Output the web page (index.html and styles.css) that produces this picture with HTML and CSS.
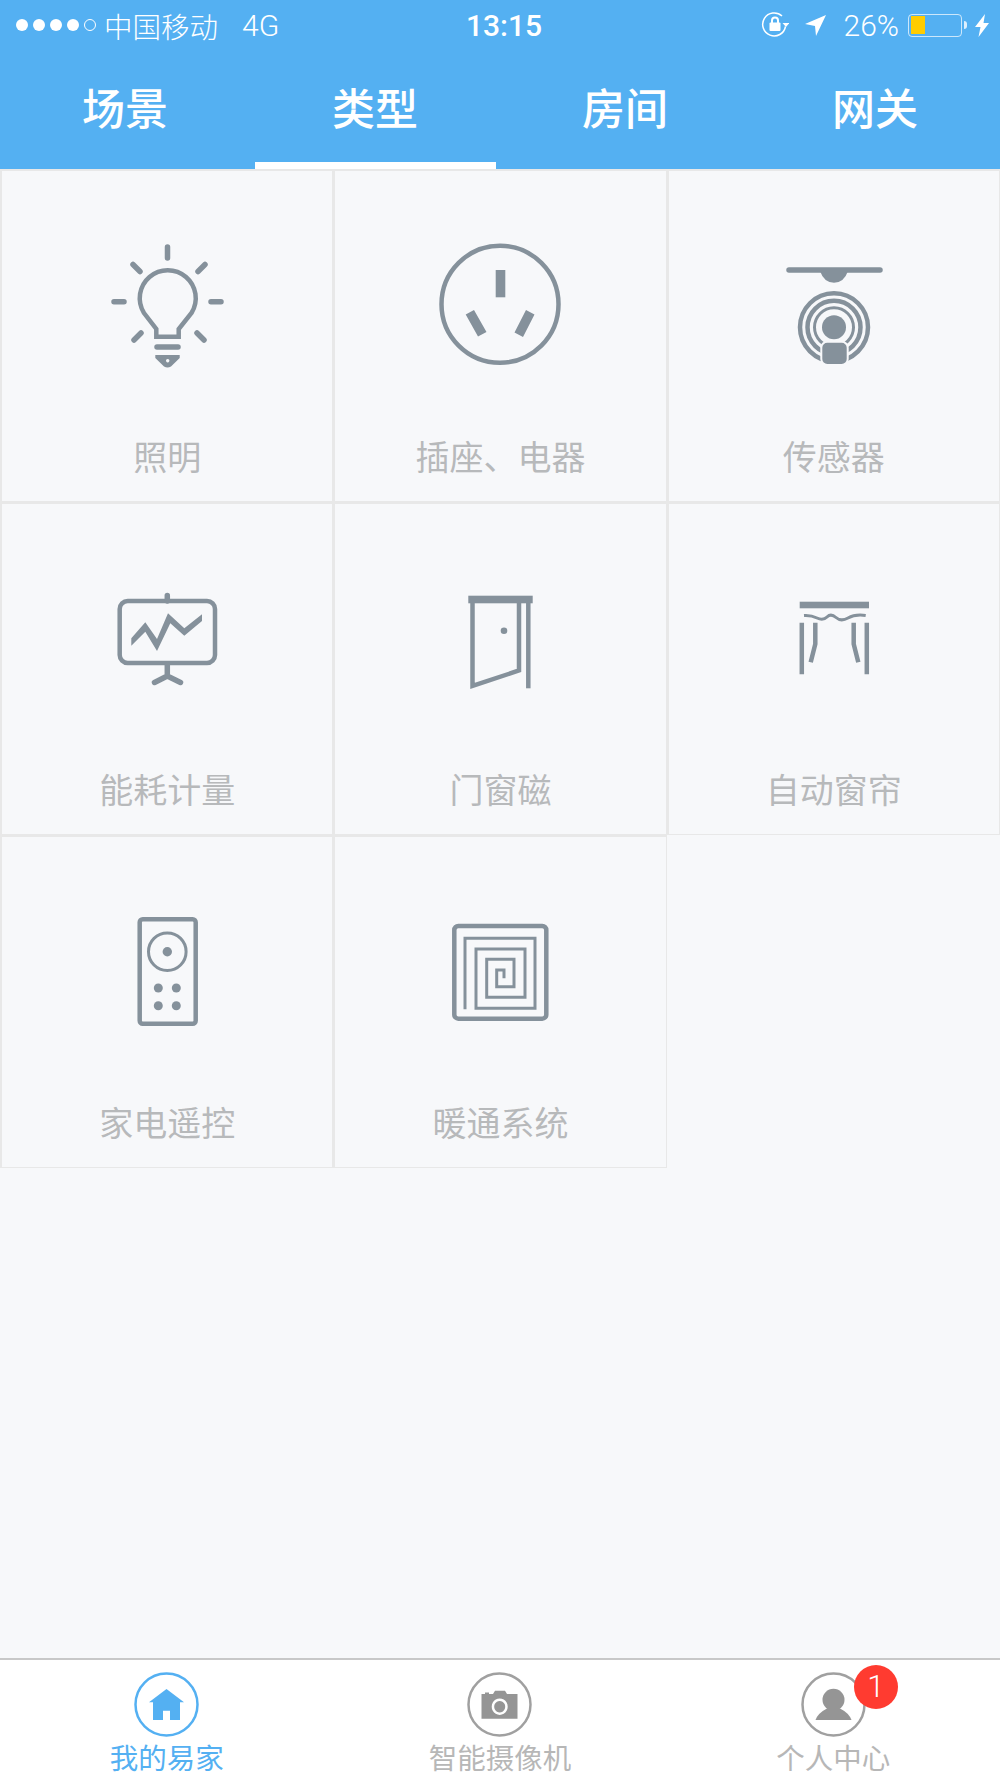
FILE: index.html
```html
<!DOCTYPE html>
<html lang="zh-CN">

<head>
    <meta charset="UTF-8" />
    <meta name="viewport" content="width=device-width, initial-scale=1.0" />
    <title>类型</title>
    <link rel="stylesheet" href="styles.css">
</head>

<body>
    <div class="app">
        <header class="header">
            <div class="status-bar">
                <div class="status-left">
                    <svg class="signal" width="86" height="16" viewBox="0 0 86 16">
                        <circle cx="7" cy="8" r="6" />
                        <circle cx="24" cy="8" r="6" />
                        <circle cx="41" cy="8" r="6" />
                        <circle cx="58" cy="8" r="6" />
                        <circle class="hollow" cx="75" cy="8" r="5.5" />
                    </svg>
                    <span class="carrier">中国移动</span>
                    <span class="network">4G</span>
                </div>
                <div class="status-time">13:15</div>
                <div class="status-right">
                    <svg class="rotation" width="28" height="28" viewBox="0 0 28 28">
                        <path class="line" d="M24.5 15.5A11.5 11.5 0 1 1 21 5" />
                        <path d="M21.5 12h7l-3.500 4z" />
                        <rect x="8.500" y="11.500" width="11" height="8.500" rx="1" />
                        <path class="line thin" d="M11 12V9.500a3 3 0 0 1 6 0V12" />
                    </svg>
                    <svg class="arrow" width="22" height="22" viewBox="0 0 22 22">
                        <path d="M21 1L11 22 10 12 0 10z" />
                    </svg>
                    <span class="percent">26%</span>
                    <div class="battery">
                        <div class="battery-fill"></div>
                    </div>
                    <div class="battery-nub"></div>
                    <svg class="bolt" width="14" height="23" viewBox="0 0 14 23">
                        <path d="M10 0L0 13h5.500L3.500 23 14 9H8.500z" />
                    </svg>
                </div>
            </div>
            <nav class="tabs">
                <div class="tab"><span class="tab-label">场景</span></div>
                <div class="tab active"><span class="tab-label">类型</span><span class="tab-line"></span></div>
                <div class="tab"><span class="tab-label">房间</span></div>
                <div class="tab"><span class="tab-label">网关</span></div>
            </nav>
        </header>

        <main class="grid">
            <div class="cell">
                <svg class="icon" viewBox="0 0 140 140">
                    <g class="rays">
                        <path d="M70.500 12V23M36 29.500L43 36.500M108 29.500L101 36.500M17 66.700H27M114 66.700H124M37 105L44 98M107 105L100 98" />
                    </g>
                    <path class="outline" d="M59.300 101.700V94L47 78A28 28 0 1 1 94.500 78L81.700 94V101.700Z" />
                    <path class="rays" d="M60 112H81" />
                    <path class="solid" fill-rule="evenodd" d="M58.300 120H82.700V123L74 131.500Q70.500 133.500 67 131.500L58.300 123ZM70.700 124a1.700 1.700 0 1 0 .01 0Z" />
                </svg>
                <span class="cell-label">照明</span>
            </div>
            <div class="cell">
                <svg class="icon" viewBox="0 0 140 140">
                    <circle class="outline" cx="70" cy="69.300" r="58.500" />
                    <rect class="solid" x="65.700" y="35" width="9.600" height="27.300" />
                    <path class="solid" d="M35.700 79.500L44 75 56.500 97 48 101.500ZM104.500 79.500L96 75 84.500 97.500 93 102Z" />
                </svg>
                <span class="cell-label">插座、电器</span>
            </div>
            <div class="cell">
                <svg class="icon" viewBox="0 0 140 140">
                    <path class="rays" d="M25 35H116" />
                    <path class="solid" d="M56 36H84Q80 47.700 70 47.700T56 36Z" />
                    <circle class="outline" cx="70" cy="92.300" r="34" />
                    <circle class="outline" cx="70" cy="92.300" r="26.500" />
                    <circle class="outline thin" cx="70" cy="92.300" r="19.500" />
                    <circle class="solid" cx="70" cy="92.300" r="12" />
                    <rect class="solid gap" x="57.300" y="106.700" width="26.400" height="23.300" rx="6" />
                </svg>
                <span class="cell-label">传感器</span>
            </div>
            <div class="cell">
                <svg class="icon" viewBox="0 0 140 140">
                    <rect class="outline" x="22.700" y="33" width="95.300" height="62" rx="8" />
                    <path class="rays" d="M70.300 27.500V33M70.300 97V108L57.500 114.500M70.300 108L83.500 114.500" />
                    <path class="solid" d="M34.300 70.300L48.300 54.300 60 71 71 45.300 87.300 60.300 105 46.300V53L87.300 67.700 73.300 55.300 60 83 48.300 63.700 34.300 77.700Z" />
                </svg>
                <span class="cell-label">能耗计量</span>
            </div>
            <div class="cell">
                <svg class="icon" viewBox="0 0 140 140">
                    <rect class="solid" x="38.300" y="27.700" width="64.400" height="7.600" />
                    <path class="outline" d="M42.500 35V118L89 102.500V35" />
                    <path class="outline" d="M98.300 35V120.300" />
                    <circle class="solid" cx="74" cy="62.700" r="3.300" />
                </svg>
                <span class="cell-label">门窗磁</span>
            </div>
            <div class="cell">
                <svg class="icon" viewBox="0 0 140 140">
                    <rect class="solid" x="35.700" y="33.700" width="69.300" height="6.600" />
                    <path class="outline wave" d="M40 47.500Q47 47 53 50T63 49 72 49.500 84 50 101.700 47.500" />
                    <path class="outline" d="M37.800 54.700V106.300M102.800 54.700V106.300M51.300 54.700V76L46.700 94.300M89.700 54.700V76L94.300 94.300" />
                </svg>
                <span class="cell-label">自动窗帘</span>
            </div>
            <div class="cell">
                <svg class="icon" viewBox="0 0 140 140">
                    <rect class="outline" x="42.700" y="18.300" width="56" height="104.400" rx="3" />
                    <circle class="outline thin" cx="70.300" cy="50.700" r="18.800" />
                    <circle class="solid" cx="70.300" cy="50.700" r="4.700" />
                    <circle class="solid" cx="61.300" cy="87" r="4.500" />
                    <circle class="solid" cx="79.300" cy="87" r="4.500" />
                    <circle class="solid" cx="61.300" cy="104.700" r="4.500" />
                    <circle class="solid" cx="79.300" cy="104.700" r="4.500" />
                </svg>
                <span class="cell-label">家电遥控</span>
            </div>
            <div class="cell">
                <svg class="icon" viewBox="0 0 140 140">
                    <rect class="outline" x="24.300" y="25" width="92" height="92.700" rx="4" />
                    <path class="outline thin" d="M35 108.300V37.300H105V107.300H46V48H95V96.300H56.700V58.300H84V85.700H66.700V69H74V77.300" />
                </svg>
                <span class="cell-label">暖通系统</span>
            </div>
            <div class="cell-empty"></div>
        </main>

        <footer class="tabbar">
            <div class="tabbar-item selected">
                <svg class="tabbar-icon" viewBox="0 0 65 65">
                    <circle class="ring" cx="32.500" cy="32.500" r="31" />
                    <path class="glyph" d="M32.500 17L50 30.300H46V48H36V38.700H29V48H19V30.300H15Z" />
                </svg>
                <span class="tabbar-label">我的易家</span>
            </div>
            <div class="tabbar-item">
                <svg class="tabbar-icon" viewBox="0 0 65 65">
                    <circle class="ring" cx="32.500" cy="32.500" r="31" />
                    <path class="glyph" fill-rule="evenodd" d="M14.500 46.700V22H18V20.500H22V22H26L28 18.700H38L40 22H50.500V46.700ZM32.700 26.500a8 8.200 0 1 0 .01 0ZM32.700 29a5.500 5.700 0 1 1-.01 0Z" />
                </svg>
                <span class="tabbar-label">智能摄像机</span>
            </div>
            <div class="tabbar-item">
                <div class="tabbar-icon-wrap">
                    <svg class="tabbar-icon" viewBox="0 0 65 65">
                        <circle class="ring" cx="32.500" cy="32.500" r="31" />
                        <circle class="glyph" cx="32.500" cy="27.700" r="11" />
                        <path class="glyph" d="M14.500 48Q17 41 26 36.500H39Q48 41 50.500 48Z" />
                    </svg>
                    <span class="badge">1</span>
                </div>
                <span class="tabbar-label">个人中心</span>
            </div>
        </footer>
    </div>
</body>

</html>
```

FILE: styles.css
```css
* {
    box-sizing: border-box;
}

body {
    margin: 0;
    font-family: "Noto Sans CJK SC", "Noto Sans", sans-serif;
    background: #f7f8fa;
}

.app {
    width: 1000px;
    height: 1778px;
    display: flex;
    flex-direction: column;
    overflow: hidden;
}

/* status bar + top tabs */
.header {
    height: 169px;
    background: #54b0f2;
    color: white;
    display: flex;
    flex-direction: column;
    flex-shrink: 0;
}

.status-bar {
    height: 50px;
    display: grid;
    grid-template-columns: 1fr auto 1fr;
    align-items: center;
    font-size: 30px;
    font-family: Roboto, "Noto Sans CJK SC", sans-serif;
    font-weight: 300;
}

.status-left {
    display: flex;
    align-items: center;
    padding-left: 15px;
}

.signal {
    fill: white;
    margin-right: 3px;
}

.signal .hollow {
    fill: none;
    stroke: white;
    stroke-width: 1;
}

.carrier {
    font-family: "Noto Sans CJK SC", sans-serif;
    font-size: 28.500px;
    font-weight: 300;
}

.network {
    margin-left: 24px;
}

.status-time {
    font-weight: 500;
    margin-left: 8px;
}

.status-right {
    display: flex;
    align-items: center;
    justify-content: flex-end;
    padding-right: 11px;
    fill: white;
}

.status-right .line {
    fill: none;
    stroke: white;
    stroke-width: 1.5;
}

.status-right .thin {
    stroke-width: 2;
}

.arrow {
    margin-left: 16px;
}

.percent {
    margin-left: 17px;
}

.battery {
    width: 54px;
    height: 23px;
    margin-left: 9px;
    padding: 1.500px;
    border: 1px solid rgba(255, 255, 255, 0.7);
    border-radius: 4px;
}

.battery-fill {
    width: 14px;
    height: 100%;
    background: #ffcc00;
}

.battery-nub {
    width: 3px;
    height: 8px;
    margin-left: 2px;
    background: rgba(255, 255, 255, 0.8);
    border-radius: 0 3px 3px 0;
}

.bolt {
    margin-left: 8px;
}

.tabs {
    flex: 1;
    display: flex;
}

.tab {
    width: 250px;
    display: flex;
    flex-direction: column;
    align-items: center;
}

.tab-label {
    flex: 1;
    display: flex;
    align-items: center;
    font-size: 43px;
    font-weight: 500;
}

.tab:not(.active) .tab-label {
    padding-bottom: 7px;
}

.tab-line {
    width: 241px;
    height: 7px;
    background: white;
}

/* device type grid */
.grid {
    flex: 1;
    display: grid;
    grid-template-columns: repeat(3, 1fr);
    grid-auto-rows: 333px;
    align-content: start;
}

.cell {
    display: flex;
    flex-direction: column;
    align-items: center;
    padding-top: 64px;
    border-style: solid;
    border-color: #e8e8e8;
    border-width: 2px 1px 1px 2px;
}

.icon {
    width: 140px;
    height: 140px;
    flex-shrink: 0;
}

.outline {
    fill: none;
    stroke: #85919b;
    stroke-width: 4.500;
}

.outline.thin,
.outline.wave {
    stroke-width: 3;
}

.solid {
    fill: #85919b;
}

.solid.gap {
    stroke: #f7f8fa;
    stroke-width: 2;
}

.rays {
    fill: none;
    stroke: #85919b;
    stroke-width: 5.500;
    stroke-linecap: round;
}

.cell-label {
    margin-top: 58px;
    font-size: 34px;
    line-height: 46px;
    color: #b7b9bb;
}

/* bottom tab bar */
.tabbar {
    height: 120px;
    flex-shrink: 0;
    display: grid;
    grid-template-columns: repeat(3, 1fr);
    background: white;
    border-top: 2px solid #c8c8c8;
}

.tabbar-item {
    display: flex;
    flex-direction: column;
    align-items: center;
    padding-top: 12px;
    color: #b7b7b7;
}

.tabbar-icon-wrap {
    position: relative;
    height: 65px;
}

.tabbar-icon {
    display: block;
    width: 65px;
    height: 65px;
}

.ring {
    fill: none;
    stroke: #a0a0a0;
    stroke-width: 2.500;
}

.glyph {
    fill: #959595;
}

.selected {
    color: #54b0f2;
}

.selected .ring {
    stroke: #54b0f2;
}

.selected .glyph {
    fill: #54b0f2;
}

.tabbar-label {
    font-size: 28.500px;
    line-height: 38px;
    margin-top: 1px;
}

.badge {
    position: absolute;
    top: -7px;
    left: 53px;
    width: 44px;
    height: 44px;
    border-radius: 50%;
    background: #ff3b30;
    color: white;
    font-family: Roboto, sans-serif;
    font-weight: 300;
    font-size: 31px;
    line-height: 44px;
    text-align: center;
}
```
